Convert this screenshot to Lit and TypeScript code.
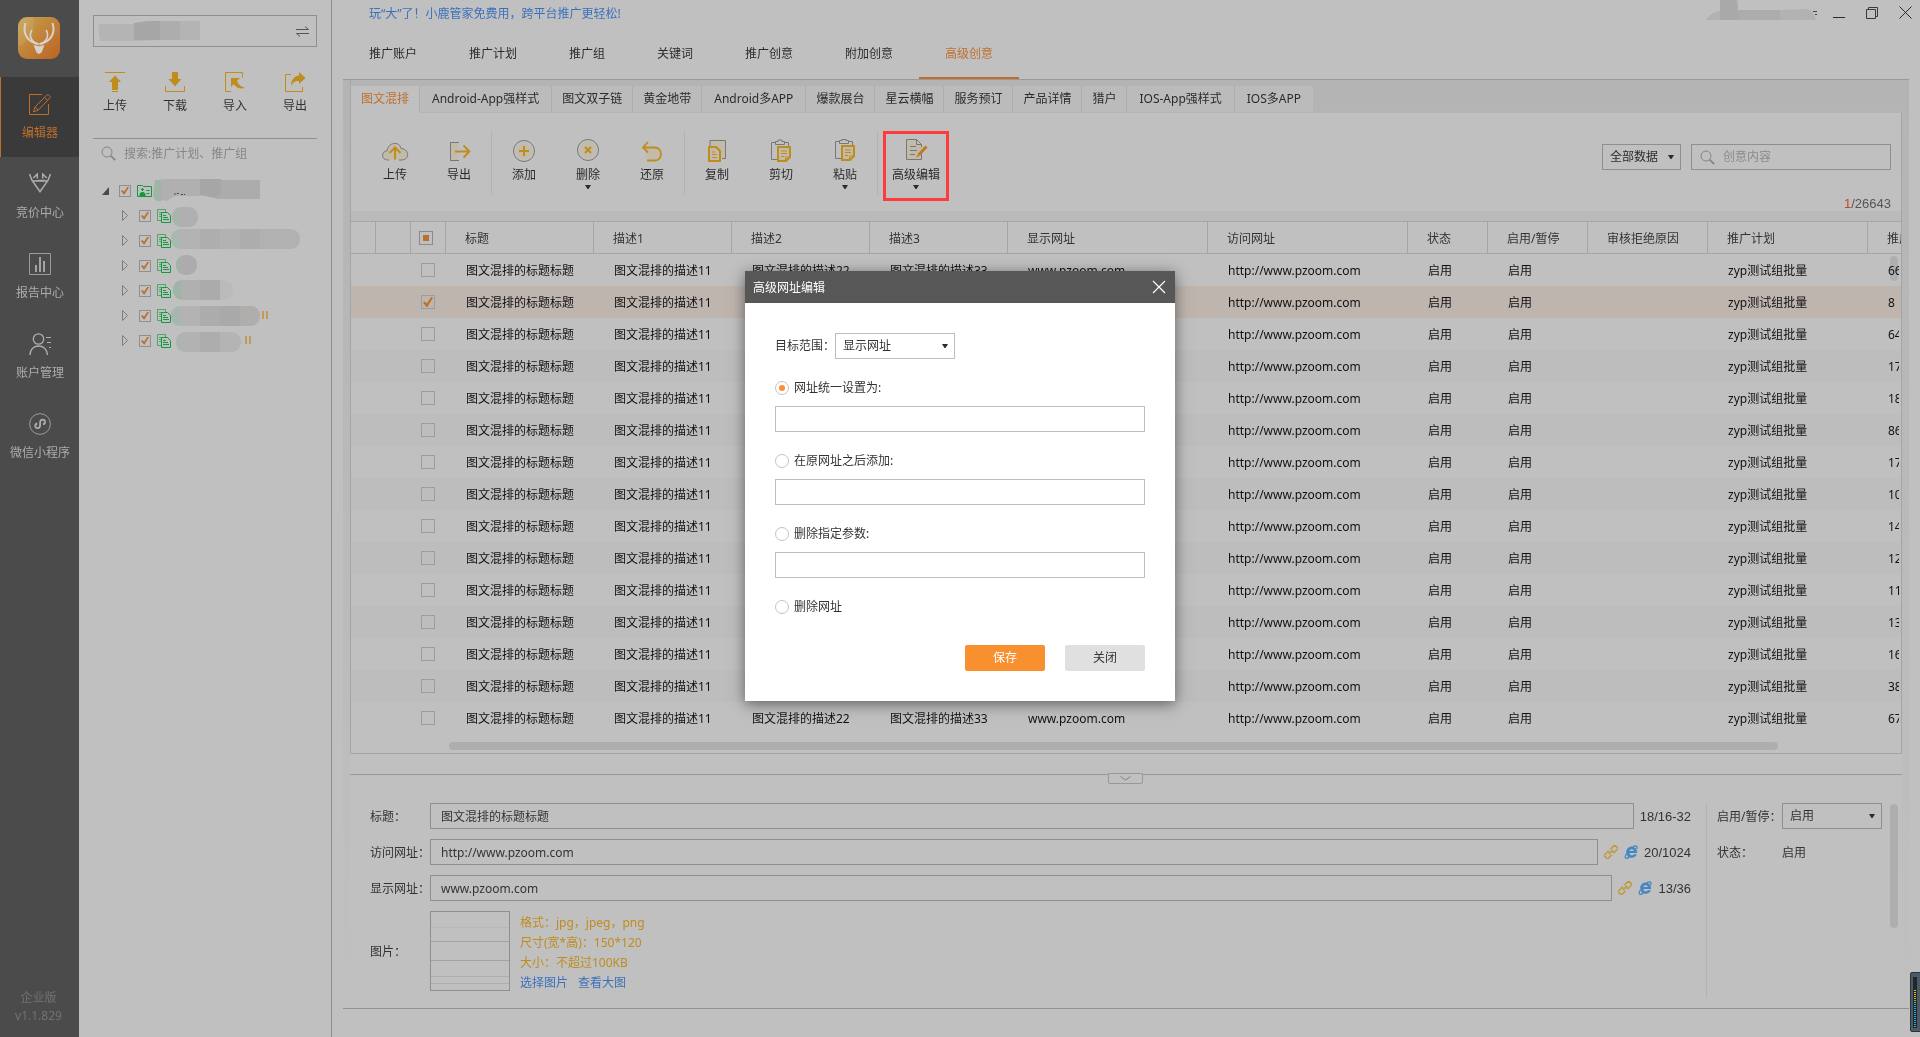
import { LitElement, html, css, svg, nothing } from "lit";
import { customElement, state } from "lit/decorators.js";
import { classMap } from "lit/directives/class-map.js";

const base = css`
  * {
    box-sizing: border-box;
  }
  button,
  input,
  select {
    font: inherit;
    color: inherit;
    margin: 0;
    border-radius: 0;
  }
  button {
    background: none;
    border: 0;
    padding: 0;
  }
  svg {
    display: block;
    flex: none;
  }
  a {
    color: inherit;
    text-decoration: none;
  }
  .select {
    display: grid;
    align-items: center;
  }
  .select select {
    grid-area: 1 / 1;
    appearance: none;
    width: 100%;
    height: 26px;
    padding: 0 20px 0 7px;
    background: transparent;
    border: 1px solid #8f8f8f;
  }
  .select svg {
    grid-area: 1 / 1;
    justify-self: end;
    margin-right: 7px;
    pointer-events: none;
  }
  .check {
    appearance: none;
    display: grid;
    place-content: center;
    flex: none;
    width: 12px;
    height: 12px;
    border: 1px solid #8f8f8f;
    background: transparent;
  }
  .check.large {
    width: 14px;
    height: 14px;
    border-color: #9d9d9d;
  }
  .check:checked::before {
    content: "";
    width: 8px;
    height: 8px;
    background: #bf6f2c;
    clip-path: polygon(0% 56%, 20% 44%, 38% 66%, 82% 0%, 100% 8%, 44% 100%, 32% 98%);
  }
  .check.large:checked::before {
    width: 10px;
    height: 10px;
  }
  .check:indeterminate {
    border-color: #8a8a8a;
  }
  .check:indeterminate::before {
    content: "";
    width: 6px;
    height: 6px;
    background: #bf6f2c;
  }
`;

const caret = html`<svg width="6" height="4" viewBox="0 0 6 4"><path d="M0 0h6L3.5 4h-1z" fill="#2b2b2b" /></svg>`;

const magnifier = html`<svg width="15" height="15" viewBox="0 0 15 15" fill="none" stroke="#868686">
  <circle cx="6" cy="6" r="5" />
  <path d="M9.6 9.6l4.6 4.6" stroke-width="1.8" />
</svg>`;

/* ---------- left navigation ---------- */

const navIcons = {
  edit: svg`<path d="M13 1.500H.5v20h19V11" /><path d="M4.500 18.800l1.600-4.800L17.800 2c1.400-1 4.200 1 3.200 2.700L9.300 17.200z M6.200 14l3 3.200 M15.400 4.500l3.200 3" />`,
  bid: svg`<path d="M3.500 8h15L11 18.800z M6 8l5-.500h5 M.5 1l2.800 7 M4.300 5L8.300 1v4.500 M21.500 1l-2.800 7 M17.700 5l-4-4v4.500" stroke-width="1.500" />`,
  report: svg`<path d="M.5.5h21v21H.5z" stroke="#9b9b9b" /><path d="M7 19v-7M11 19V4M15 19V8" stroke-width="1.800" />`,
  user: svg`<circle cx="9.500" cy="6" r="5.200" stroke-width="1.300" /><path d="M1 22c0-12 17-12 17.500 0" stroke-width="1.300" /><path d="M17 4.500h5M18 9.500h4M20 14.500h2" />`,
  mini: svg`<circle cx="11" cy="11" r="10.400" stroke="#9b9b9b" /><path d="M8.300 10.500c-3 .6-2.500 5 .3 4.700 2-.2 2.500-1.500 2.500-3V9.700c0-1.600.8-3 2.600-3 3 .1 3 4.300.2 4.500" stroke-width="1.800" />`,
};

const navItems: [keyof typeof navIcons, string][] = [
  ["edit", "编辑器"],
  ["bid", "竞价中心"],
  ["report", "报告中心"],
  ["user", "账户管理"],
  ["mini", "微信小程序"],
];

@customElement("side-nav")
class SideNav extends LitElement {
  static styles = [
    base,
    css`
      :host {
        display: flex;
        flex-direction: column;
        width: 79px;
        flex: none;
        background: #4b4b4b;
        color: #adadad;
        padding-bottom: 12px;
      }
      .logo {
        margin: 17px 18px 18px;
      }
      .item {
        display: flex;
        flex-direction: column;
        align-items: center;
        gap: 9px;
        height: 80px;
        padding-top: 16px;
        border-left: 1px solid transparent;
      }
      .item.active {
        background: #3a3a3a;
        border-left-color: #bf6f2c;
        color: #bf6f2c;
      }
      .version {
        margin-top: auto;
        padding-right: 2px;
        text-align: center;
        line-height: 18px;
        color: #727272;
      }
    `,
  ];
  render() {
    return html`
      <svg class="logo" width="42" height="42" viewBox="0 0 42 42" fill="none">
        <defs>
          <linearGradient id="g" x1="0" y1="0" x2="1" y2="1">
            <stop offset="0" stop-color="#c6a552" />
            <stop offset=".5" stop-color="#c18238" />
            <stop offset="1" stop-color="#bd6223" />
          </linearGradient>
        </defs>
        <rect width="42" height="42" rx="9" fill="url(#g)" />
        <path d="M5 0h10c3 14-3 24-15 30V9z" fill="#fff" opacity=".08" />
        <path d="M7.500 6C4 17 10 25 20.500 27.200M34.500 6C38 17 32 25 21.500 27.200" stroke="#d6d2cd" stroke-width="2" />
        <path d="M14 13c-4 6 0 12.500 6.500 14M28 13c4 6 0 12.500-6.500 14" stroke="#d6d2cd" stroke-width="1.600" />
        <path d="M15.500 28l5.500 1.200 5.500-1.200-3 7.500-2.500 1.500-2.500-1.500z" fill="#d6d2cd" />
      </svg>
      ${navItems.map(
        ([icon, label], i) => html`<a href="#" class=${classMap({ item: true, active: i === 0 })}>
          <svg width="22" height="23" viewBox="0 0 22 23" fill="none" stroke="currentColor">${navIcons[icon]}</svg>
          ${label}
        </a>`
      )}
      <div class="version">企业版<br />v1.1.829</div>
    `;
  }
}

/* ---------- account tree ---------- */

const quickIcons = [
  ["上传", svg`<path d="M0 .5h20" stroke="#bf8c1e" /><path d="M10 3.500l6 6.500h-3v8H7v-8H4z M7 19h6v1H7z" fill="#bf8c1e" />`],
  ["下载", svg`<path d="M.5 14v5.500h19V14" stroke="#bf8c1e" /><path d="M7 0h6v7h3.500L10 14.500 3.500 7H7z" fill="#bf8c1e" />`],
  ["导入", svg`<path d="M6 19.500H.5V.5h17v5" stroke="#bf8c1e" /><path d="M6 6h9l-3 2.700c1 3 3.500 6 8 7-5 2-9-.5-11.500-3.500L6 15z" fill="#bf8c1e" />`],
  ["导出", svg`<path d="M6 2.500H.5v17h17V15" stroke="#bf8c1e" /><path d="M14 0l6.500 6-6.500 6V9c-4-.3-6.500 1.500-8 5 0-6 3-10 8-10.500z" fill="#bf8c1e" />`],
] as const;

const accountIcon = html`<svg width="15" height="12" viewBox="0 0 15 12" fill="none" stroke="#139a3c">
  <path d="M.5.5h5l1 1h8v10H.5z" />
  <path d="M3 10.500c0-4 5-4 5 0z M5.500 3v3M4 4.500h3" fill="#139a3c" stroke-width="1.200" />
  <path d="M9.500 5.500h3M9.500 8.500h3" />
</svg>`;

const planIcon = html`<svg width="14" height="14" viewBox="0 0 14 14" fill="none" stroke="#139a3c">
  <path d="M4 11.500H.5V.5h8V3M2 3.500h4M2 5.500h2M2 7.500h2" opacity=".65" />
  <path d="M4.500 3.500h6l3 3v7h-9zM6 6.500h3M6 8.500h5M6 10.500h6" />
</svg>`;

/* Redacted names: tinted leading blob, stepped grey blocks and optional pause marks. */
interface Mask {
  gap: number;
  width: number;
  top: number;
  blocks: [number, number, string][];
  pause?: number;
}
const masks: Mask[] = [
  { gap: 1, width: 26, top: 4, blocks: [[0, 8, "#a9b5ac"], [8, 18, "#b0b0b0"]] },
  { gap: 0, width: 129, top: 1, blocks: [[0, 9, "#a9b9af"], [9, 20, "#b3b3b3"], [29, 20, "#aeaeae"], [49, 20, "#b2b2b2"], [69, 20, "#adadad"], [89, 40, "#b1b1b1"]] },
  { gap: 5, width: 21, top: 2, blocks: [[0, 4, "#9fb3a6"], [4, 17, "#acacac"]] },
  { gap: 2, width: 60, top: 2, blocks: [[0, 8, "#9fb5a7"], [8, 19, "#b0b0b0"], [27, 20, "#ababab"], [47, 13, "#bababa"]] },
  { gap: 0, width: 89, top: 3, blocks: [[0, 9, "#a6b8ad"], [9, 20, "#b3b3b3"], [29, 20, "#acacac"], [49, 20, "#a9a9a9"], [69, 20, "#b0aeac"]], pause: 91 },
  { gap: 5, width: 65, top: 4, blocks: [[0, 4, "#aab5ae"], [4, 20, "#b2b2b2"], [24, 20, "#adadad"], [44, 21, "#b4b4b4"]], pause: 74 },
];

@customElement("account-panel")
class AccountPanel extends LitElement {
  static styles = [
    base,
    css`
      :host {
        display: block;
        width: 253px;
        flex: none;
        padding: 15px 14px 0;
        border-right: 1px solid #8e8e8e;
        color: #333;
      }
      .account {
        display: flex;
        align-items: center;
        justify-content: space-between;
        width: 100%;
        height: 32px;
        padding: 0 7px 0 4px;
        border: 1px solid #8f8f8f;
      }
      .quick {
        display: flex;
        justify-content: space-between;
        padding: 25px 10px 24px;
        border-bottom: 1px solid #8f8f8f;
      }
      .quick button {
        display: flex;
        flex-direction: column;
        align-items: center;
        gap: 6px;
        width: 24px;
        white-space: nowrap;
      }
      .search {
        display: flex;
        align-items: center;
        gap: 8px;
        height: 29px;
        padding-left: 8px;
        margin-bottom: 10px;
      }
      .search input {
        flex: 1;
        min-width: 0;
        border: 0;
        padding: 0;
        background: transparent;
      }
      .search input::placeholder {
        color: #868686;
        opacity: 1;
      }
      .row {
        display: flex;
        align-items: center;
        height: 25px;
        padding-left: 9px;
      }
      .row .check {
        margin: 0 6px 0 10px;
      }
      .child {
        padding-left: 29px;
      }
      .mask {
        overflow: visible;
      }
    `,
  ];
  render() {
    return html`
      <button class="account" aria-label="切换账户">
        <svg width="102" height="22" viewBox="0 0 102 22">
          <path d="M0 4h38l12-3h52v19H60l-22 1H2z" fill="#b4b4b4" />
          <path d="M36 3l14-2h12v19H36z" fill="#a6a6a6" />
          <path d="M62 1h20v19H62z" fill="#adadad" />
        </svg>
        <svg width="13" height="11" viewBox="0 0 13 11" fill="none" stroke="#555"><path d="M0 3.500h12.500L9 .5M13 7.500H.5L4 10.500" /></svg>
      </button>
      <div class="quick">
        ${quickIcons.map(
          ([label, icon]) => html`<button><svg width="21" height="20" viewBox="0 0 21 20" fill="none">${icon}</svg>${label}</button>`
        )}
      </div>
      <label class="search">${magnifier}<input aria-label="搜索" placeholder="搜索:推广计划、推广组" /></label>
      <div class="row">
        <svg width="7" height="8" viewBox="0 0 7 8"><path d="M7 0v8H0z" fill="#4a4a4a" /></svg>
        <input class="check" type="checkbox" aria-label="账户" checked />
        ${accountIcon}
        <svg class="mask" width="108" height="25" viewBox="0 0 108 25">
          <path d="M3 2h10v18c-4 5-10 4-12-2z" fill="#9fb5a6" />
          <path d="M9 1h40v17L24 18l-10 5-5-2z" fill="#b0b0b0" />
          <path d="M48 1h21v20l-21-4z" fill="#a6a6a6" />
          <path d="M69 2h39v19H63l6-5z" fill="#acacac" />
          <path d="M22 16.500l2-1h3m2 1h4" stroke="#444" fill="none" stroke-dasharray="2 1" />
        </svg>
      </div>
      ${masks.map(
        (m, i) => html`<div class="row child">
          <svg width="7" height="11" viewBox="0 0 7 11" fill="none" stroke="#7d7d7d"><path d="M.5.5v10l5-5z" /></svg>
          <input class="check" type="checkbox" aria-label="推广计划" checked />
          ${planIcon}
          <svg class="mask" width="110" height="25" viewBox="0 0 110 25">
            <defs><clipPath id=${`mask-${i}`}><rect x=${m.gap} y=${m.top} width=${m.width} height="20" rx="9" /></clipPath></defs>
            <g clip-path=${`url(#mask-${i})`}>
              ${m.blocks.map(([x, w, c]) => svg`<rect x=${m.gap + x} y=${m.top} width=${w} height="20" fill=${c} />`)}
            </g>
            ${m.pause ? svg`<path d=${`M${m.pause + 1} 8v8M${m.pause + 5} 8v8`} stroke="#c09a5c" stroke-width="2" />` : nothing}
          </svg>
        </div>`
      )}
    `;
  }
}

/* ---------- creative table ---------- */

const toolIcons = {
  upload: svg`<path d="M8 21H6.500C-.5 20.500.3 12 6.300 11.700 6.500 3.500 18.500 1.500 20 9.500c8.500.5 9 11 1 11.500h-3" fill="#c3bba9" /><path d="M14 20.500V9M8.500 14L14 8.500l5.500 5.500" stroke="#bf8c1e" stroke-width="2" />`,
  export: svg`<path d="M13 3.500H5.500v18H13" fill="#c3bba9" /><path d="M5.500 3.500H14M5.500 21.500H14" /><path d="M10 12.500h14M18.500 6.500l6 6-6 6" stroke="#bf8c1e" stroke-width="1.800" />`,
  add: svg`<circle cx="14" cy="12" r="10.500" /><circle cx="14" cy="12" r="8.500" fill="#c3bba9" stroke="none" /><path d="M14 7v10M9 12h10" stroke="#bf8c1e" stroke-width="2" />`,
  remove: svg`<circle cx="14" cy="11" r="10.500" /><circle cx="14" cy="11" r="8.500" fill="#c3bba9" stroke="none" /><path d="M11 8l6 6M17 8l-6 6" stroke="#bf8c1e" stroke-width="2" />`,
  restore: svg`<path d="M6 8.500h11c8 .5 8 12.500 0 13H9" fill="#c3bba9" stroke="none" /><path d="M10 3L5 8.500l5 5M5 8.500h12c8 .5 8 12.500 0 13H9" stroke="#bf8c1e" stroke-width="1.800" />`,
  copy: svg`<path d="M7 7V1.500h15.500v18H19" fill="#c3bba9" /><path d="M6 8h7l4 4v10H6z" fill="#c3bba9" stroke="#bf8c1e" stroke-width="2" /><path d="M9 13h3M9 15.500h5M9 18.500h5" stroke="#bf8c1e" />`,
  cut: svg`<path d="M9 3.500H4.500v17H10M18 3.500h3.500V7M8.500 2.500h2.500V1h4v1.500h2.500v3h-9z" /><path d="M11 8h12v10l-4 4h-8z" fill="#c3bba9" stroke="#bf8c1e" stroke-width="2" /><path d="M14 12h6M14 14.500h6M14 17.500h3M18.500 22v-4H23" stroke="#bf8c1e" />`,
  paste: svg`<path d="M9 2.500H4.500v17H10M18 2.500h3.500V6M8.500 1.500h2.500V.5h4v1h2.500v3h-9z" /><path d="M11 7h12v10l-4 4h-8z" fill="#c3bba9" stroke="#bf8c1e" stroke-width="2" /><path d="M14 11h6M14 13.500h6M14 16.500h3M18.500 21v-4H23" stroke="#bf8c1e" />`,
  advanced: svg`<path d="M19.500 12v8.500h-15V.5h10l5 5v3M14.500.5v5h5" fill="#c3bba9" /><path d="M8 7.500h6M8 11.500h7M8 15.500h5" /><path d="M16.500 16l8-8.500" stroke="#bf7a1e" stroke-width="3" /><path d="M14.500 18.500l.5-3 2 2z" fill="#bf7a1e" stroke="none" />`,
};

type Tool = { icon: keyof typeof toolIcons; label: string; menu?: boolean; marked?: boolean };
const toolGroups: Tool[][] = [
  [{ icon: "upload", label: "上传" }, { icon: "export", label: "导出" }],
  [{ icon: "add", label: "添加" }, { icon: "remove", label: "删除", menu: true }, { icon: "restore", label: "还原" }],
  [{ icon: "copy", label: "复制" }, { icon: "cut", label: "剪切" }, { icon: "paste", label: "粘贴", menu: true }],
  [{ icon: "advanced", label: "高级编辑", menu: true, marked: true }],
];

const subTabs = ["图文混排", "Android-App强样式", "图文双子链", "黄金地带", "Android多APP", "爆款展台", "星云横幅", "服务预订", "产品详情", "猎户", "IOS-App强样式", "IOS多APP"];
const headings = ["标题", "描述1", "描述2", "描述3", "显示网址", "访问网址", "状态", "启用/暂停", "审核拒绝原因", "推广计划", "推广组"];
const colWidths = [25, 35, 35, 148, 138, 138, 138, 200, 200, 80, 100, 120, 160];
const groupValues = ["66", "8", "64", "17", "18", "86", "17", "10", "14", "12", "11", "13", "16", "38", "67"];

@customElement("creative-table")
class CreativeTable extends LitElement {
  static styles = [
    base,
    css`
      :host {
        display: block;
      }
      .subtabs {
        display: flex;
        padding-top: 6px;
        color: #2b2b2b;
        border-left: 1px solid #a8a8a8;
      }
      .subtabs button {
        height: 27px;
        padding: 0 10px;
        white-space: nowrap;
        background: #bbb;
        border-right: 1px solid #adadad;
        border-bottom: 1px solid #b4b4b4;
      }
      .subtabs button.latin {
        padding: 0 12px;
      }
      .subtabs button:last-child {
        border-right: 0;
      }
      .subtabs button.active {
        background: #c0c0c0;
        border-bottom-color: #c0c0c0;
        color: #bf6f2c;
      }
      .frame {
        background: #c0c0c0;
        border: 1px solid #a5a5a5;
        border-top: 0;
      }
      .toolbar {
        display: flex;
        align-items: flex-start;
        height: 98px;
        padding: 18px 10px 0 12px;
        color: #2b2b2b;
      }
      .tool {
        display: flex;
        flex-direction: column;
        align-items: center;
        width: 64px;
        height: 70px;
        padding-top: 5px;
        border: 3px solid transparent;
        white-space: nowrap;
      }
      .tool span {
        margin: 4px 0 2px;
      }
      .tool.marked {
        width: 66px;
        margin-left: 5px;
        border-color: #ff3b3b;
      }
      .rule {
        width: 1px;
        height: 64px;
        background: #b3b3b3;
      }
      .filters {
        display: grid;
        grid-template-columns: 79px 200px;
        gap: 26px 10px;
        margin-left: auto;
        padding-top: 13px;
      }
      .find {
        display: flex;
        align-items: center;
        gap: 8px;
        height: 26px;
        padding: 0 8px;
        border: 1px solid #8f8f8f;
      }
      .find input {
        flex: 1;
        min-width: 0;
        border: 0;
        padding: 0;
        background: transparent;
      }
      .find input::placeholder {
        color: #8a8a8a;
        opacity: 1;
      }
      .count {
        grid-column: 2;
        text-align: right;
        font: 13px/16px "Liberation Sans", Arial, sans-serif;
        color: #555;
      }
      .count b {
        font-weight: normal;
        color: #c5442f;
      }
      .grid {
        position: relative;
        overflow: hidden;
        padding-top: 10px;
        background: #bababa;
      }
      table {
        width: 100%;
        min-width: 1550px;
        table-layout: fixed;
        border-collapse: separate;
        border-spacing: 0;
        background: #c0c0c0;
        color: #111;
      }
      th {
        height: 33px;
        padding: 2px 0 0 19px;
        font-weight: normal;
        text-align: left;
        white-space: nowrap;
        overflow: hidden;
        color: #333;
        border: solid #a5a5a5;
        border-width: 1px 1px 1px 0;
      }
      th:last-child {
        border-right: 0;
      }
      td {
        height: 32px;
        padding: 2px 2px 0 20px;
      }
      td span {
        display: block;
        overflow: hidden;
        white-space: nowrap;
      }
      tbody tr:nth-child(even) {
        background: #bdbdbd;
      }
      tbody tr.picked {
        background: #bfb5af;
      }
      .pick {
        padding: 0 0 0 10px;
      }
      th.pick {
        padding: 0 0 0 8px;
      }
      .hbar {
        height: 19px;
        padding: 8px 123px 3px 98px;
        background: #c0c0c0;
      }
      .hbar div {
        height: 8px;
        border-radius: 4px;
        background: #aeaeae;
      }
      .vbar {
        position: absolute;
        top: 45px;
        right: 3px;
        width: 8px;
        height: 25px;
        border-radius: 4px;
        background: #e9e9e9;
        mix-blend-mode: multiply;
      }
    `,
  ];
  render() {
    return html`
      <div class="subtabs">
        ${subTabs.map((t, i) => html`<button class=${classMap({ active: i === 0, latin: /[A-Z]/.test(t) })}>${t}</button>`)}
      </div>
      <div class="frame">
        <div class="toolbar">
          ${toolGroups.map(
            (group, g) => html`${g ? html`<div class="rule"></div>` : nothing}${group.map(
              (t) => html`<button class=${classMap({ tool: true, marked: !!t.marked })}>
                <svg width="28" height="24" viewBox="0 0 28 24" fill="none" stroke="#777">${toolIcons[t.icon]}</svg>
                <span>${t.label}</span>
                ${t.menu ? caret : nothing}
              </button>`
            )}`
          )}
          <div class="filters">
            <div class="select">
              <select aria-label="数据范围"><option>全部数据</option></select>
              ${caret}
            </div>
            <label class="find">${magnifier}<input aria-label="创意内容" placeholder="创意内容" /></label>
            <div class="count"><b>1</b>/26643</div>
          </div>
        </div>
        <div class="grid">
          <table>
            <colgroup>
              ${colWidths.map((w) => html`<col width=${w} />`)}
              <col />
            </colgroup>
            <thead>
              <tr>
                <th></th>
                <th></th>
                <th class="pick"><input class="check large" type="checkbox" aria-label="全选" .indeterminate=${true} /></th>
                ${headings.map((h) => html`<th>${h}</th>`)}
              </tr>
            </thead>
            <tbody>
              ${groupValues.map((v, i) => {
                const cells = ["图文混排的标题标题", "图文混排的描述11", "图文混排的描述22", "图文混排的描述33", "www.pzoom.com", "http://www.pzoom.com", "启用", "启用", "", "zyp测试组批量", v];
                return html`<tr class=${classMap({ picked: i === 1 })}>
                  <td></td>
                  <td></td>
                  <td class="pick"><input class="check large" type="checkbox" aria-label="选择" ?checked=${i === 1} /></td>
                  ${cells.map((c) => html`<td><span>${c}</span></td>`)}
                </tr>`;
              })}
            </tbody>
          </table>
          <div class="hbar"><div></div></div>
          <div class="vbar"></div>
        </div>
      </div>
    `;
  }
}

/* ---------- detail form ---------- */

const linkIcon = html`<svg width="14" height="14" viewBox="0 0 14 14" fill="none" stroke="#c09a3c" stroke-width="1.500">
  <g transform="rotate(-45 7 7)">
    <path d="M5.500 9.500H-.500v-5h6V6M8.500 4.500h6v5h-6V8M4 7h6" />
  </g>
</svg>`;

const browserIcon = html`<svg width="14" height="14" viewBox="0 0 14 14">
  <path fill="#4487c2" fill-rule="evenodd" d="M7.600 1.800c3.600 0 5.600 2.600 5.500 6.200H5.400c.1 2.800 3.600 3 4.600 1.200h2.900c-1.600 5-10.500 4.900-10.600-1.800 0-3.600 2.300-5.600 5.300-5.600zM5.400 6h4.500c-.2-2.400-4.300-2.400-4.500 0z" />
  <path fill="none" stroke="#4487c2" stroke-width="1.300" d="M8.800 1.700c3.300-1.700 5-.6 3.900 2.300M2.600 8.500C-.2 12.800 1.400 14.400 5.200 12.400M2.600 6C4 4 6 2.600 8 1.800" />
</svg>`;

@customElement("detail-form")
class DetailForm extends LitElement {
  static styles = [
    base,
    css`
      :host {
        display: block;
        background: #c0c0c0;
        color: #333;
      }
      .splitter {
        position: relative;
        height: 21px;
        border-bottom: 1px solid #989898;
      }
      .splitter button {
        position: absolute;
        left: 50%;
        top: 19px;
        display: grid;
        place-items: center;
        width: 35px;
        height: 11px;
        margin-left: -18px;
        background: #c0c0c0;
        border: 1px solid #989898;
        border-radius: 0 0 2px 2px;
      }
      .body {
        display: flex;
        padding: 28px 4px 10px 20px;
      }
      .main {
        flex: 1;
        display: flex;
        flex-direction: column;
        gap: 10px;
        min-height: 195px;
        padding-right: 15px;
      }
      .line {
        display: flex;
        align-items: center;
        gap: 6px;
      }
      .line > label,
      .line > .label {
        width: 54px;
        padding-top: 2px;
        flex: none;
        white-space: nowrap;
      }
      .line > input {
        flex: 1;
        min-width: 0;
        height: 26px;
        padding: 0 10px;
        background: transparent;
        border: 1px solid #8f8f8f;
      }
      .num {
        padding-top: 2px;
        font: 13px/16px "Liberation Sans", Arial, sans-serif;
      }
      .thumb {
        width: 80px;
        height: 80px;
        border: 1px solid #8f8f8f;
      }
      .hints {
        display: flex;
        flex-direction: column;
        margin-left: 4px;
        padding-top: 4px;
        line-height: 20px;
        color: #bf8c1e;
      }
      .media {
        height: 80px;
      }
      .links {
        display: flex;
        gap: 10px;
        color: #3c70bb;
      }
      .side {
        display: grid;
        grid-template-columns: 65px 100px;
        grid-auto-rows: 26px;
        gap: 10px 0;
        align-items: center;
        align-content: start;
        padding: 0 8px 0 10px;
        border-left: 1px solid #b3b3b3;
      }
      .side > label,
      .side > span {
        padding-top: 2px;
        white-space: nowrap;
      }
      .vbar {
        width: 8px;
        height: 124px;
        margin-top: 1px;
        border-radius: 4px;
        background: #aeaeae;
      }
    `,
  ];
  render() {
    return html`
      <div class="splitter">
        <button aria-label="收起"><svg width="11" height="5" viewBox="0 0 11 5" fill="none" stroke="#808080"><path d="M.5.5l5 3.500 5-3.500" /></svg></button>
      </div>
      <div class="body">
        <div class="main">
          <div class="line"><label for="title">标题：</label><input id="title" value="图文混排的标题标题" /><span class="num">18/16-32</span></div>
          <div class="line"><label for="visit">访问网址：</label><input id="visit" value="http://www.pzoom.com" />${linkIcon}${browserIcon}<span class="num">20/1024</span></div>
          <div class="line"><label for="show">显示网址：</label><input id="show" value="www.pzoom.com" />${linkIcon}${browserIcon}<span class="num">13/36</span></div>
          <div class="line media">
            <span class="label">图片：</span>
            <svg class="thumb" viewBox="0 0 78 78" fill="none" stroke="#a3a3a3">
              <path d="M0 15.500h78" stroke="#b8b8b8" />
              <path d="M0 29.500h78M0 48.500h78" />
              <path d="M0 64.500h78M0 71.500h78" stroke="#adadad" />
            </svg>
            <div class="hints">
              <span>格式：jpg，jpeg，png</span>
              <span>尺寸(宽*高)：150*120</span>
              <span>大小：不超过100KB</span>
              <span class="links"><a href="#">选择图片</a><a href="#">查看大图</a></span>
            </div>
          </div>
        </div>
        <div class="side">
          <label for="enable">启用/暂停：</label>
          <div class="select"><select id="enable"><option>启用</option></select>${caret}</div>
          <span>状态：</span><span>启用</span>
        </div>
        <div class="vbar"></div>
      </div>
    `;
  }
}

/* ---------- url dialog ---------- */

@customElement("url-dialog")
class UrlDialog extends LitElement {
  @state() private mode = 0;
  private options = ["网址统一设置为:", "在原网址之后添加:", "删除指定参数:", "删除网址"];
  static styles = [
    base,
    css`
      :host {
        display: block;
        width: 430px;
        background: #fff;
        color: #333;
        box-shadow: 0 3px 14px rgba(0, 0, 0, 0.5);
      }
      header {
        display: flex;
        align-items: center;
        justify-content: space-between;
        height: 32px;
        padding: 0 9px 0 8px;
        background: #575757;
        color: #fff;
      }
      h2 {
        margin: 0;
        padding-top: 2px;
        font: inherit;
      }
      form {
        padding: 30px;
      }
      .scope {
        display: flex;
        align-items: center;
        margin-bottom: 21px;
      }
      .scope label {
        width: 60px;
        white-space: nowrap;
      }
      .scope .select {
        width: 120px;
      }
      .scope select,
      .text {
        border-color: #bdbdbd;
      }
      .option {
        display: flex;
        align-items: center;
        gap: 5px;
        height: 16px;
      }
      .option input {
        appearance: none;
        display: grid;
        place-content: center;
        width: 14px;
        height: 14px;
        border: 1px solid #c4c4c4;
        border-radius: 50%;
      }
      .option input:checked::before {
        content: "";
        width: 6px;
        height: 6px;
        border-radius: 50%;
        background: #f8902f;
      }
      .text {
        display: block;
        width: 100%;
        height: 26px;
        margin: 10px 0 21px;
        padding: 0 8px;
        border: 1px solid #bdbdbd;
      }
      .actions {
        display: flex;
        justify-content: flex-end;
        gap: 20px;
        margin-top: 30px;
      }
      .actions button {
        width: 80px;
        height: 26px;
        border-radius: 2px;
        background: #e0e0e0;
      }
      .actions .primary {
        background: #f8902f;
        color: #fff;
      }
    `,
  ];
  render() {
    return html`
      <header>
        <h2>高级网址编辑</h2>
        <button aria-label="关闭窗口"><svg width="14" height="14" viewBox="0 0 14 14" stroke="#fff" stroke-width="1.200"><path d="M1 1l12 12M13 1L1 13" /></svg></button>
      </header>
      <form>
        <div class="scope">
          <label for="scope">目标范围：</label>
          <div class="select"><select id="scope"><option>显示网址</option></select>${caret}</div>
        </div>
        ${this.options.map(
          (o, i) => html`<label class="option"><input type="radio" name="mode" .checked=${this.mode === i} @change=${() => (this.mode = i)} />${o}</label>
            ${i < 3 ? html`<input class="text" aria-label=${o} />` : nothing}`
        )}
        <div class="actions">
          <button type="button" class="primary">保存</button>
          <button type="button">关闭</button>
        </div>
      </form>
    `;
  }
}

/* ---------- shell ---------- */

const tabs = ["推广账户", "推广计划", "推广组", "关键词", "推广创意", "附加创意", "高级创意"];

@customElement("app-root")
class AppRoot extends LitElement {
  static styles = [
    base,
    css`
      :host {
        position: relative;
        display: flex;
        min-height: 100vh;
        overflow: hidden;
        background: #c0c0c0;
        color: #333;
        font: 12px/16px "Noto Sans", "Noto Sans CJK SC", sans-serif;
      }
      main {
        flex: 1;
        min-width: 0;
        padding: 0 11px;
      }
      .top {
        display: flex;
        align-items: flex-start;
        height: 27px;
        padding-left: 26px;
      }
      .notice {
        margin: 6px auto 0 0;
        color: #3c70bb;
      }
      .window {
        display: flex;
        gap: 21px;
        padding: 6px 0 0 16px;
        margin-right: -3px;
      }
      .tabs {
        display: flex;
        height: 53px;
        border-bottom: 1px solid #999;
      }
      .tabs a {
        height: 52px;
        padding: 19px 26px 0;
        color: #2b2b2b;
      }
      .tabs a.active {
        color: #bf6f2c;
        border-bottom: 2px solid #bf6f2c;
      }
      .panel {
        padding: 0 7px;
        background: linear-gradient(#b4b4b4, #c0c0c0);
        border-bottom: 1px solid #939393;
      }
      .overlay {
        position: absolute;
        inset: 0;
        display: flex;
        justify-content: center;
        align-items: flex-start;
        padding-top: 271px;
      }
      .meter {
        position: absolute;
        right: 0;
        bottom: 5px;
      }
    `,
  ];
  render() {
    return html`
      <side-nav></side-nav>
      <account-panel></account-panel>
      <main>
        <div class="top">
          <a class="notice" href="#">玩“大”了！小鹿管家免费用，跨平台推广更轻松!</a>
          <svg width="111" height="20" viewBox="0 0 111 20">
            <path d="M0 20c4-6 8-8 14-9V0h18v10h43l25-1c5 1 8 3 10 11z" fill="#b2b2b2" />
            <path d="M14 0h16l2 10v10H14z" fill="#a9a9a9" />
            <path d="M32 10h42v10H32z" fill="#acacac" />
            <path d="M107 11.500h4M109 14.500h2" stroke="#444" />
          </svg>
          <div class="window">
            <button aria-label="最小化"><svg width="12" height="12" viewBox="0 0 12 12" stroke="#2b2b2b"><path d="M0 10.500h12" /></svg></button>
            <button aria-label="还原窗口"><svg width="12" height="12" viewBox="0 0 12 12" fill="none" stroke="#3a3a3a"><path d="M.5 2.500h9v9h-9zM2.500 2.500v-2h9v9h-2" /></svg></button>
            <button aria-label="关闭程序"><svg width="13" height="13" viewBox="0 0 13 13" stroke="#2b2b2b"><path d="M.5.5l12 12M12.500.5l-12 12" /></svg></button>
          </div>
        </div>
        <nav class="tabs">${tabs.map((t, i) => html`<a href="#" class=${classMap({ active: i === 6 })}>${t}</a>`)}</nav>
        <div class="panel">
          <creative-table></creative-table>
          <detail-form></detail-form>
        </div>
      </main>
      <div class="overlay"><url-dialog></url-dialog></div>
      <svg class="meter" width="10" height="60" viewBox="0 0 10 60">
        <rect x=".5" y=".5" width="12" height="59" rx="1.500" fill="#4d5a63" stroke="#2d3338" />
        <rect x="3" y="5" width="4" height="51" fill="#20262e" />
        <path d="M5 18v10" stroke="#d8c020" stroke-width="2" stroke-dasharray="1 1" />
        <path d="M5 28v4" stroke="#6cc46a" stroke-width="2" stroke-dasharray="1 1" />
        <path d="M5 32v23" stroke="#2aa6dc" stroke-width="2" stroke-dasharray="1 1" />
      </svg>
    `;
  }
}
